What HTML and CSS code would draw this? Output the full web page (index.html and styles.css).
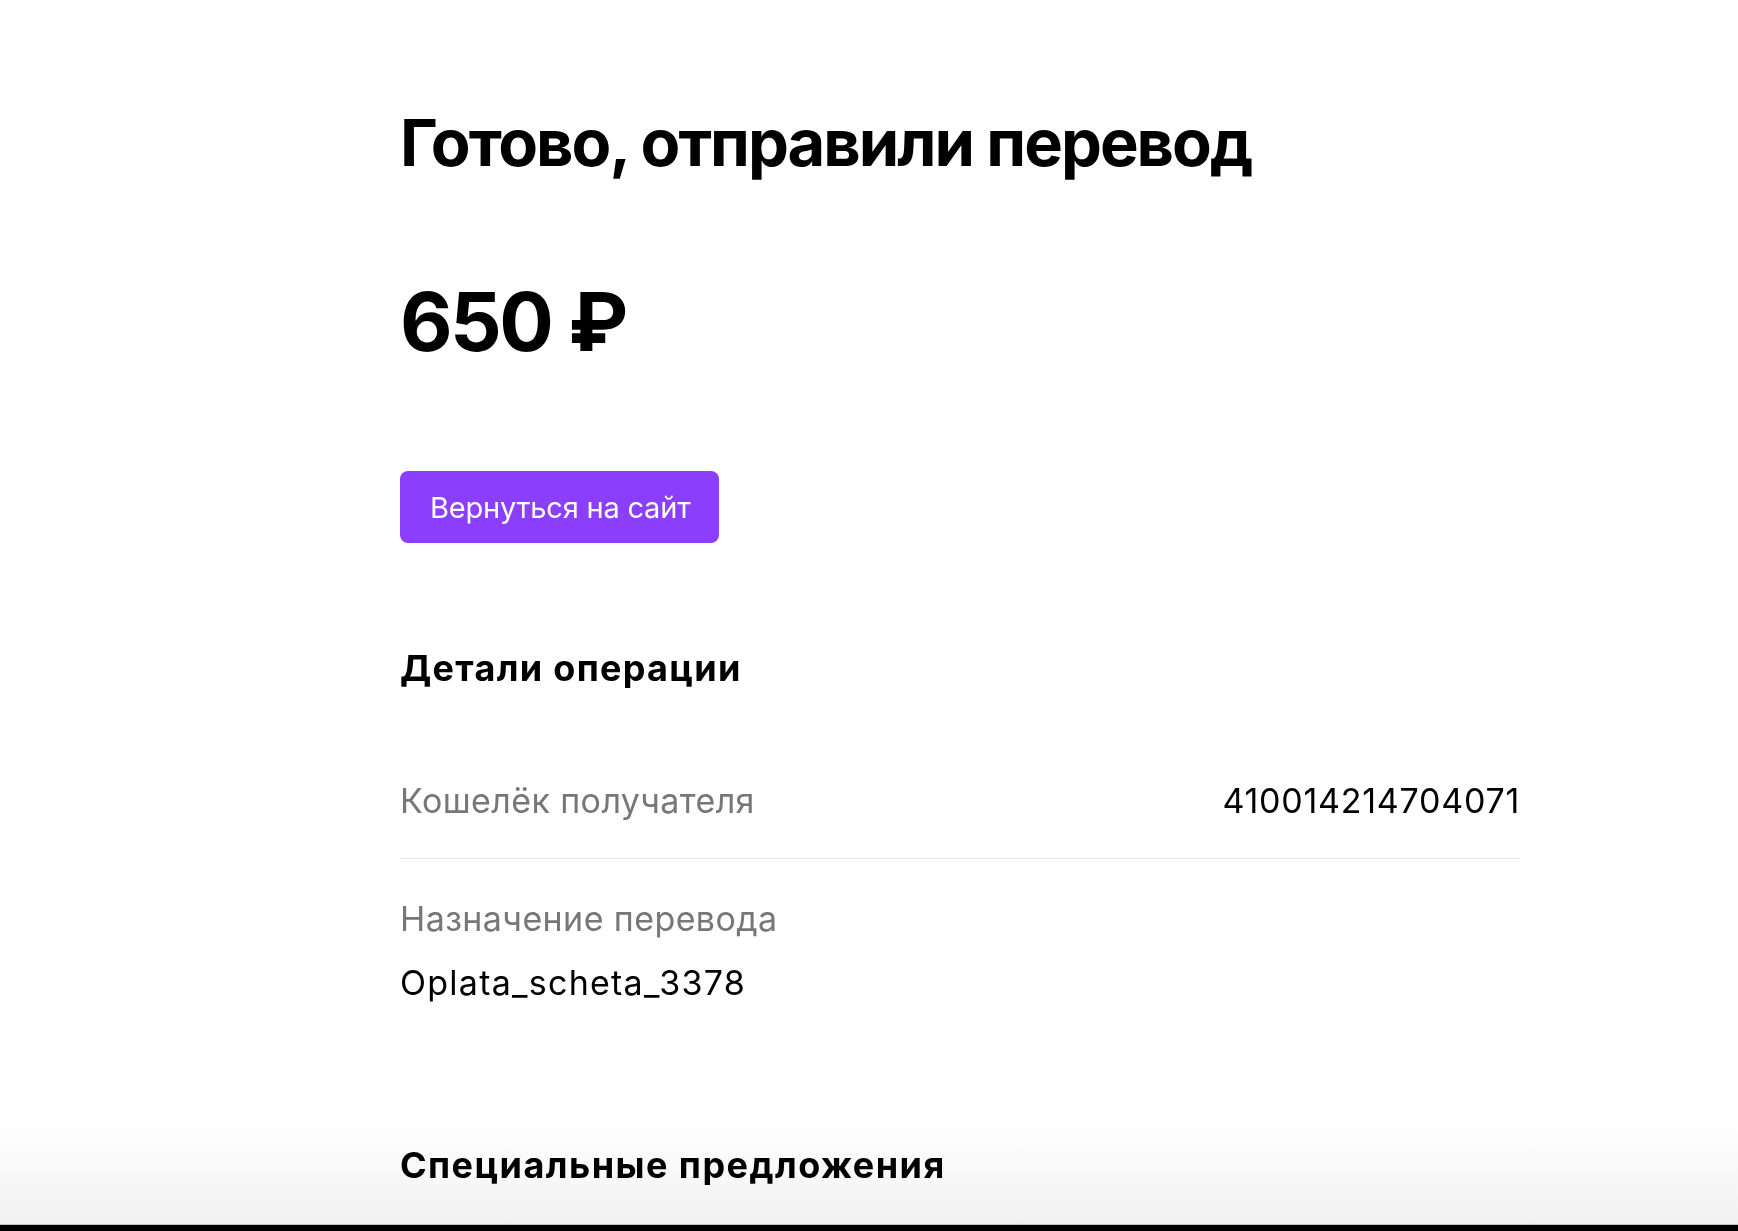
FILE: index.html
```html
<!DOCTYPE html>
<html lang="ru">
<head>
<meta charset="utf-8">
<title>Готово, отправили перевод</title>
<link rel="stylesheet" href="styles.css">
</head>
<body>
<div class="bottom-fade"></div>
<main class="page">
  <h1 class="title">Готово, отправили перевод</h1>
  <div class="amount">650 ₽</div>
  <a class="btn" href="#">Вернуться на сайт</a>
  <h2 class="section">Детали операции</h2>
  <div class="row row-split">
    <span class="label">Кошелёк получателя</span>
    <span class="value value-num">410014214704071</span>
  </div>
  <div class="row row-stack">
    <span class="label">Назначение перевода</span>
    <span class="value value-latin">Oplata_scheta_3378</span>
  </div>
  <h2 class="section section-offers">Специальные предложения</h2>
</main>
</body>
</html>
```
FILE: styles.css
```css
html, body {
  margin: 0;
  padding: 0;
  background: #ffffff;
}
body {
  font-family: Inter, "Noto Sans", sans-serif;
  color: #000;
  overflow: hidden;
  height: 1231px;
}
.page {
  position: relative;
  z-index: 1;
  width: 1120px;
  margin-left: 400px;
  padding-top: 103px;
  display: flex;
  flex-direction: column;
  align-items: flex-start;
}
.title {
  margin: 0;
  font-size: 65px;
  line-height: 80px;
  font-weight: 700;
  letter-spacing: -2px;
}
.amount {
  margin-top: 91px;
  font-size: 81px;
  line-height: 96px;
  font-weight: 700;
  letter-spacing: -2.5px;
}
.btn {
  margin-top: 101px;
  height: 72px;
  padding: 0 29px 0 30px;
  box-sizing: border-box;
  display: inline-flex;
  align-items: center;
  background: #8b3ffd;
  color: #fff;
  border-radius: 8px;
  text-decoration: none;
  font-size: 29px;
  font-weight: 400;
  letter-spacing: -0.2px;
}
.section {
  margin: 105px 0 0;
  font-size: 36px;
  line-height: 40px;
  font-weight: 700;
  letter-spacing: 1.3px;
}
.row {
  align-self: stretch;
  font-size: 34px;
  line-height: 40px;
  letter-spacing: 0.4px;
}
.row-split {
  margin-top: 93px;
  padding-bottom: 37px;
  border-bottom: 1px solid #e6e6e6;
  display: flex;
  justify-content: space-between;
}
.row-stack {
  padding-top: 40px;
  display: flex;
  flex-direction: column;
  gap: 24px;
}
.label {
  color: #777777;
}
.value {
  color: #000;
}
.value-num {
  letter-spacing: 0.75px;
}
.value-latin {
  letter-spacing: 1.25px;
}
.section-offers {
  margin-top: 142px;
  letter-spacing: 1.45px;
}
.bottom-fade {
  position: fixed;
  z-index: 0;
  left: 0;
  right: 0;
  bottom: 0;
  height: 110px;
  background: linear-gradient(to bottom, #ffffff 0%, #f1f1f1 94%, #000 94.5%, #000 100%);
  pointer-events: none;
}
```
